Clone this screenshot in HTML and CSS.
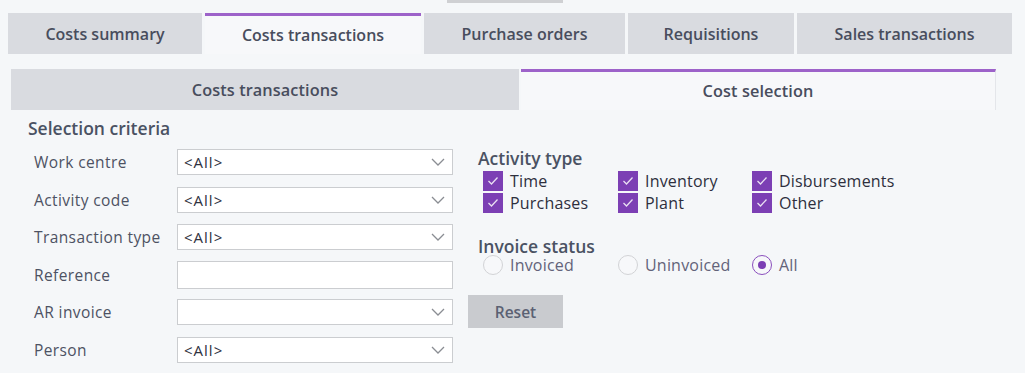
FILE: index.html
```html
<!DOCTYPE html>
<html>
<head>
<meta charset="utf-8">
<link rel="stylesheet" href="styles.css">
</head>
<body>
<div class="topstrip"><div class="topstrip-block"></div></div>
<div class="tabs">
  <div class="tab t1">Costs summary</div>
  <div class="tab t2 active">Costs transactions</div>
  <div class="tab t3">Purchase orders</div>
  <div class="tab t4">Requisitions</div>
  <div class="tab t5">Sales transactions</div>
</div>
<div class="subtabs">
  <div class="subtab s1">Costs transactions</div>
  <div class="subtab s2 active">Cost selection</div>
</div>
<div class="content">
  <div class="left">
    <div class="heading sel-heading">Selection criteria</div>
    <div class="form">
      <div class="row"><label>Work centre</label><div class="field combo"><span>&lt;All&gt;</span><svg class="chev" width="14" height="8" viewBox="0 0 14 8"><path d="M1 1 L7 7 L13 1" fill="none" stroke="#8a8d93" stroke-width="1.3"/></svg></div></div>
      <div class="row"><label>Activity code</label><div class="field combo"><span>&lt;All&gt;</span><svg class="chev" width="14" height="8" viewBox="0 0 14 8"><path d="M1 1 L7 7 L13 1" fill="none" stroke="#8a8d93" stroke-width="1.3"/></svg></div></div>
      <div class="row"><label>Transaction type</label><div class="field combo"><span>&lt;All&gt;</span><svg class="chev" width="14" height="8" viewBox="0 0 14 8"><path d="M1 1 L7 7 L13 1" fill="none" stroke="#8a8d93" stroke-width="1.3"/></svg></div></div>
      <div class="row"><label>Reference</label><div class="field text tall"></div></div>
      <div class="row"><label>AR invoice</label><div class="field combo"><span></span><svg class="chev" width="14" height="8" viewBox="0 0 14 8"><path d="M1 1 L7 7 L13 1" fill="none" stroke="#8a8d93" stroke-width="1.3"/></svg></div></div>
      <div class="row"><label>Person</label><div class="field combo"><span>&lt;All&gt;</span><svg class="chev" width="14" height="8" viewBox="0 0 14 8"><path d="M1 1 L7 7 L13 1" fill="none" stroke="#8a8d93" stroke-width="1.3"/></svg></div></div>
    </div>
  </div>
  <div class="right">
    <div class="heading act-heading">Activity type</div>
    <div class="checks">
      <div class="check"><span class="box"><svg width="12" height="10" viewBox="0 0 12 10"><path d="M1.5 5 L4.5 8 L10.5 1.5" fill="none" stroke="#e9dff2" stroke-width="1.3"/></svg></span>Time</div>
      <div class="check"><span class="box"><svg width="12" height="10" viewBox="0 0 12 10"><path d="M1.5 5 L4.5 8 L10.5 1.5" fill="none" stroke="#e9dff2" stroke-width="1.3"/></svg></span>Inventory</div>
      <div class="check"><span class="box"><svg width="12" height="10" viewBox="0 0 12 10"><path d="M1.5 5 L4.5 8 L10.5 1.5" fill="none" stroke="#e9dff2" stroke-width="1.3"/></svg></span>Disbursements</div>
      <div class="check"><span class="box"><svg width="12" height="10" viewBox="0 0 12 10"><path d="M1.5 5 L4.5 8 L10.5 1.5" fill="none" stroke="#e9dff2" stroke-width="1.3"/></svg></span>Purchases</div>
      <div class="check"><span class="box"><svg width="12" height="10" viewBox="0 0 12 10"><path d="M1.5 5 L4.5 8 L10.5 1.5" fill="none" stroke="#e9dff2" stroke-width="1.3"/></svg></span>Plant</div>
      <div class="check"><span class="box"><svg width="12" height="10" viewBox="0 0 12 10"><path d="M1.5 5 L4.5 8 L10.5 1.5" fill="none" stroke="#e9dff2" stroke-width="1.3"/></svg></span>Other</div>
    </div>
    <div class="heading inv-heading">Invoice status</div>
    <div class="radios">
      <div class="radio"><span class="circle"></span>Invoiced</div>
      <div class="radio"><span class="circle"></span>Uninvoiced</div>
      <div class="radio on"><span class="circle"><span class="dot"></span></span>All</div>
    </div>
    <div class="btnrow"><div class="btn">Reset</div></div>
  </div>
</div>
</body>
</html>
```

FILE: styles.css
```css
* { box-sizing: border-box; }
html, body { margin: 0; padding: 0; }
body {
  width: 1025px;
  height: 373px;
  overflow: hidden;
  background: #f5f7f9;
  font-family: "Open Sans", "Noto Sans", sans-serif;
  color: #4b5162;
}
.topstrip { height: 13px; display: flex; padding-left: 447px; }
.topstrip-block { width: 116px; height: 3px; background: #cfd0d3; }

.tabs { display: flex; gap: 3px; padding-left: 8px; height: 41px; }
.tab {
  display: flex; align-items: center; justify-content: center;
  background: #d9dbe0;
  font-size: 16px; font-weight: 600; color: #484d5d;
  letter-spacing: 0;
}
.tab.active { background: #f7f8fa; border-top: 3px solid #9d62c9; }
.t1 { width: 194px; }
.t2 { width: 216px; }
.t3 { width: 201px; }
.t4 { width: 166px; }
.t5 { width: 215px; }

.subtabs { display: flex; gap: 2px; padding-left: 11px; margin-top: 15px; height: 41px; }
.subtab {
  display: flex; align-items: center; justify-content: center;
  background: #d9dbe0;
  font-size: 16.3px; font-weight: 600; color: #484d5d;
  letter-spacing: 0.1px;
}
.subtab.active { background: #f7f8fa; border-top: 3px solid #9d62c9; border-right: 1px solid #e4e6ea; }
.s1 { width: 508px; }
.s2 { width: 475px; }

.content { display: flex; }
.left { width: 453px; padding-left: 28px; }
.heading { font-size: 17.5px; font-weight: 600; color: #4a5263; letter-spacing: 0; }
.sel-heading { margin-top: 8px; line-height: 20px; }
.form { margin-top: 11px; display: flex; flex-direction: column; gap: 11.5px; padding-left: 6px; }
.row { display: flex; align-items: center; height: 26px; }
.row label { width: 143px; font-size: 15.5px; color: #4d5263; letter-spacing: 0.4px; }
.field {
  width: 276px; height: 26px;
  background: #ffffff;
  border: 1px solid #cbcdd0;
  display: flex; align-items: center; justify-content: space-between;
  padding: 0 7px 0 6px;
  font-size: 15px; color: #2f3240; letter-spacing: 1px;
}
.field.tall { height: 28px; }
.chev { display: block; }

.right { padding-left: 15px; }
.act-heading { margin-top: 38px; padding-left: 10px; line-height: 20px; }
.checks {
  display: grid;
  grid-template-columns: 135px 134px auto;
  row-gap: 2px;
  padding-left: 15px;
  margin-top: 3px;
}
.check { display: flex; align-items: center; height: 20px; line-height: 20px; font-size: 16px; color: #2e2f3d; letter-spacing: 0.2px; }
.box {
  width: 20px; height: 20px; background: #7c3fb4;
  display: flex; align-items: center; justify-content: center;
  margin-right: 7px;
}
.box svg { display: block; }
.inv-heading { margin-top: 24px; padding-left: 10px; line-height: 18px; }
.radios { display: grid; grid-template-columns: 135px 134px auto; padding-left: 15px; margin-top: 0; }
.radio { display: flex; align-items: center; height: 20px; line-height: 20px; font-size: 16px; color: #63637a; letter-spacing: 0.2px; }
.circle {
  width: 20px; height: 20px; border-radius: 50%;
  border: 1px solid #d2d3d6; background: #f7f8fa;
  margin-right: 7px;
  display: flex; align-items: center; justify-content: center;
}
.radio.on .circle { border: 1.5px solid #8a4fbd; }
.dot { width: 8px; height: 8px; border-radius: 50%; background: #7c3fb4; }
.btnrow { margin-top: 20px; }
.btn {
  width: 95px; height: 33px; background: #c9cbcf;
  display: flex; align-items: center; justify-content: center;
  font-size: 15.5px; font-weight: 600; color: #5b6173;
}
```
